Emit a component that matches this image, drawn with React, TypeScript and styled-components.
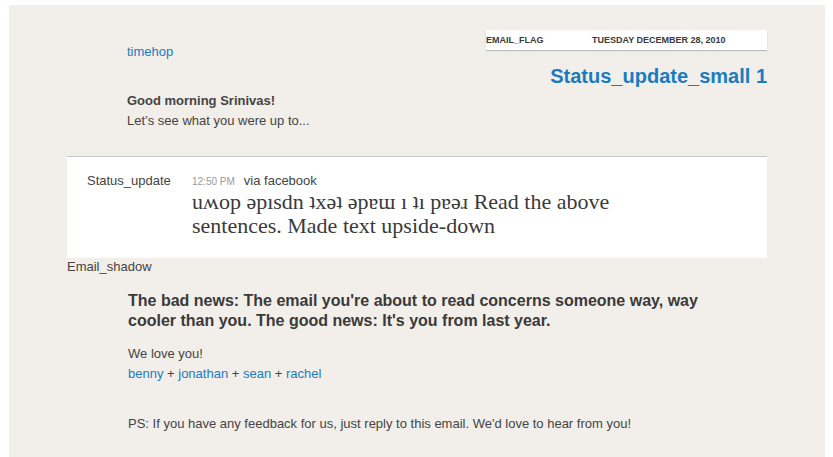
import React from "react";
import styled, { createGlobalStyle } from "styled-components";

const GlobalStyle = createGlobalStyle`
  html, body {
    margin: 0;
    padding: 0;
    background: #ffffff;
  }
  body {
    font-family: "Liberation Sans", Arial, sans-serif;
    color: #444444;
  }
  p {
    margin: 0;
  }
`;

const palette = {
  bg: "#f2eee9",
  blue: "#1a7cc0",
  text: "#444444",
  muted: "#999999",
  line: "#c8c8c8",
};

const Panel = styled.div`
  margin: 5px 8px 0 9px;
  height: 460px;
  background: ${palette.bg};
  padding-top: 25px;
  box-sizing: border-box;
`;

const Inner = styled.div`
  width: 700px;
  margin: 0 58px;
`;

const Header = styled.div`
  display: flex;
  justify-content: space-between;
  align-items: flex-start;
`;

const Intro = styled.div`
  padding: 12px 0 0 60px;
`;

const Link = styled.a`
  color: ${palette.blue};
  text-decoration: none;
  font-size: 13px;
`;

const Greeting = styled.div`
  margin-top: 31px;
  font-size: 13px;
  line-height: 20px;
`;

const Bold = styled.p`
  font-weight: bold;
`;

const FlagColumn = styled.div`
  width: 281px;
  display: flex;
  flex-direction: column;
  align-items: flex-end;
`;

const FlagBox = styled.div`
  width: 100%;
  height: 20px;
  background: #ffffff;
  box-shadow: 0 1px 1px #bcbcbc;
  display: flex;
  align-items: center;
  font-size: 9px;
  font-weight: bold;
  color: #3a3a3a;
  text-transform: uppercase;
`;

const FlagName = styled.span`
  width: 106px;
`;

const Title = styled.h1`
  margin: 14px 0 0;
  font-size: 20px;
  line-height: 24px;
  font-weight: bold;
  color: ${palette.blue};
`;

const Card = styled.div`
  margin-top: 25px;
  background: #ffffff;
  border-top: 1px solid ${palette.line};
  height: 102px;
  display: flex;
  padding: 15px 0 0 20px;
  box-sizing: border-box;
`;

const CardLabel = styled.div`
  width: 105px;
  font-size: 13px;
  line-height: 17px;
`;

const CardBody = styled.div`
  width: 428px;
`;

const Meta = styled.div`
  display: flex;
  align-items: baseline;
  gap: 9px;
  font-size: 13px;
  line-height: 17px;
`;

const Time = styled.span`
  font-size: 10px;
  color: ${palette.muted};
`;

const Quote = styled.p`
  font-family: "Liberation Serif", Georgia, serif;
  font-size: 22px;
  line-height: 24px;
  color: #3a3a3a;
`;

const Shadow = styled.div`
  margin-left: 58px;
  font-size: 13px;
  line-height: 18px;
`;

const Letter = styled.div`
  padding: 15px 0 0 61px;
`;

const Headline = styled.p`
  width: 580px;
  font-size: 16px;
  line-height: 20px;
  font-weight: bold;
  color: #3a3a3a;
`;

const SignOff = styled.div`
  margin-top: 13px;
  font-size: 13px;
  line-height: 20px;
`;

const Ps = styled.p`
  margin-top: 30px;
  font-size: 13px;
  line-height: 20px;
`;

const team = ["benny", "jonathan", "sean", "rachel"];

const App: React.FC = () => {
  return (
    <>
      <GlobalStyle />
      <Panel>
        <Inner>
          <Header>
            <Intro>
              <Link href="#">timehop</Link>
              <Greeting>
                <Bold>Good morning Srinivas!</Bold>
                <p>Let’s see what you were up to...</p>
              </Greeting>
            </Intro>
            <FlagColumn>
              <FlagBox>
                <FlagName>Email_flag</FlagName>
                <span>Tuesday December 28, 2010</span>
              </FlagBox>
              <Title>Status_update_small 1</Title>
            </FlagColumn>
          </Header>

          <Card>
            <CardLabel>Status_update</CardLabel>
            <CardBody>
              <Meta>
                <Time>12:50 PM</Time>
                <span>via facebook</span>
              </Meta>
              <Quote>
                uʍop ǝpısdn ʇxǝʇ ǝpɐɯ ı ʇı pɐǝɹ Read the above sentences. Made text upside-down
              </Quote>
            </CardBody>
          </Card>
        </Inner>
        <Shadow>Email_shadow</Shadow>
        <Inner>
          <Letter>
            <Headline>
              The bad news: The email you're about to read concerns someone way, way cooler than you. The good news: It's you from last year.
            </Headline>
            <SignOff>
              <p>We love you!</p>
              <p>
                {team.map((name, i) => (
                  <React.Fragment key={name}>
                    {i > 0 && " + "}
                    <Link href="#">{name}</Link>
                  </React.Fragment>
                ))}
              </p>
            </SignOff>
            <Ps>PS: If you have any feedback for us, just reply to this email. We'd love to hear from you!</Ps>
          </Letter>
        </Inner>
      </Panel>
    </>
  );
};

export default App;
